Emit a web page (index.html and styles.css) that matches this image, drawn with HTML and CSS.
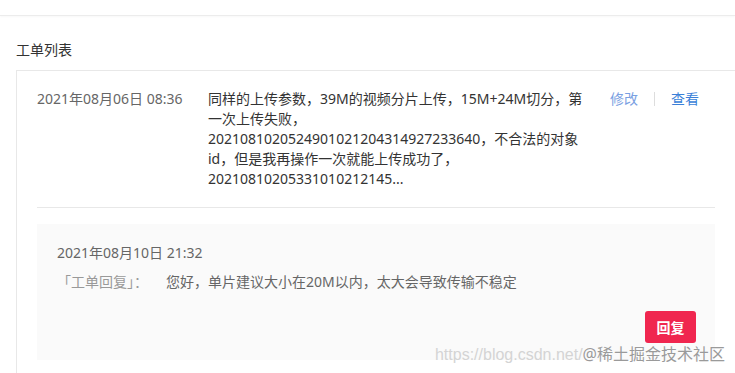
FILE: index.html
```html
<!DOCTYPE html>
<html lang="zh-CN">
<head>
<meta charset="UTF-8">
<title>工单列表</title>
<link rel="stylesheet" href="styles.css">
</head>
<body>
<div class="top-bar"></div>
<div class="main">
    <div class="title">工单列表</div>
    <div class="order-card">
        <div class="order-row">
            <div class="order-date">2021年08月06日 08:36</div>
            <div class="order-content">同样的上传参数，39M的视频分片上传，15M+24M切分，第一次上传失败，2021081020524901021204314927233640，不合法的对象id，但是我再操作一次就能上传成功了，20210810205331010212145...</div>
            <div class="order-actions">
                <a class="action action-edit">修改</a>
                <span class="action-sep"></span>
                <a class="action action-view">查看</a>
            </div>
        </div>
        <div class="order-line"></div>
        <div class="reply-box">
            <div class="reply-date">2021年08月10日 21:32</div>
            <div class="reply-text"><span class="reply-label">「工单回复」：</span><span class="reply-msg">您好，单片建议大小在20M以内，太大会导致传输不稳定</span></div>
            <div class="reply-foot">
                <button class="reply-btn">回复</button>
            </div>
        </div>
    </div>
</div>
<div class="watermark"><span class="wm-url">https://blog.csdn.net/</span><span class="wm-name">@稀土掘金技术社区</span></div>
</body>
</html>
```

FILE: styles.css
```css
html, body {
    overflow: hidden;
}
body {
    margin: 0;
    background: #fff;
    font-family: "Noto Sans", "Noto Sans CJK SC", sans-serif;
    font-size: 14px;
    color: #333;
    position: relative;
    min-height: 373px;
}
.top-bar {
    height: 15px;
    border-bottom: 1px solid #ececec;
    box-shadow: 0 1px 2px rgba(0,0,0,0.03);
}
.main {
    padding: 24px 0 0 16px;
}
.title {
    line-height: 20px;
    font-size: 14px;
    color: #333;
    margin-bottom: 10px;
}
.order-card {
    border: 1px solid #e8e8e8;
    border-right: none;
    padding: 18px 20px 0 20px;
    min-height: 320px;
}
.order-row {
    display: flex;
    align-items: flex-start;
    line-height: 20px;
}
.order-date {
    flex: 0 0 171px;
    color: #666;
}
.order-content {
    flex: 0 0 378px;
    color: #333;
}
.order-actions {
    display: flex;
    align-items: center;
    margin-left: 24px;
    height: 20px;
}
.action {
    cursor: pointer;
}
.action-edit {
    color: #7aa0e2;
}
.action-view {
    color: #3a7fd8;
}
.action-sep {
    width: 1px;
    height: 14px;
    background: #ddd;
    margin: 0 16px;
}
.order-line {
    height: 1px;
    background: #e8e8e8;
    margin: 18px 0 16px;
}
.reply-box {
    background: #fafafa;
    padding: 19px 19px 17px 20px;
    line-height: 20px;
}
.reply-date {
    color: #666;
}
.reply-text {
    margin-top: 9px;
    color: #666;
}
.reply-label {
    color: #999;
    margin-right: 18px;
}
.reply-foot {
    display: flex;
    justify-content: flex-end;
    margin-top: 19px;
}
.reply-btn {
    width: 51px;
    height: 32px;
    border: none;
    border-radius: 3px;
    background: #f0264f;
    color: #fff;
    font-family: inherit;
    font-size: 14px;
    font-weight: bold;
    padding: 0;
    cursor: pointer;
}
.watermark {
    position: absolute;
    right: 10px;
    top: 343px;
    font-size: 16px;
    line-height: 22px;
    white-space: nowrap;
}
.wm-url {
    font-family: "Liberation Sans", sans-serif;
    color: #d4d4d4;
}
.wm-name {
    color: #9a9a9a;
    text-shadow: 0 0 2px #fff, 0 0 1px #fff;
}
```
